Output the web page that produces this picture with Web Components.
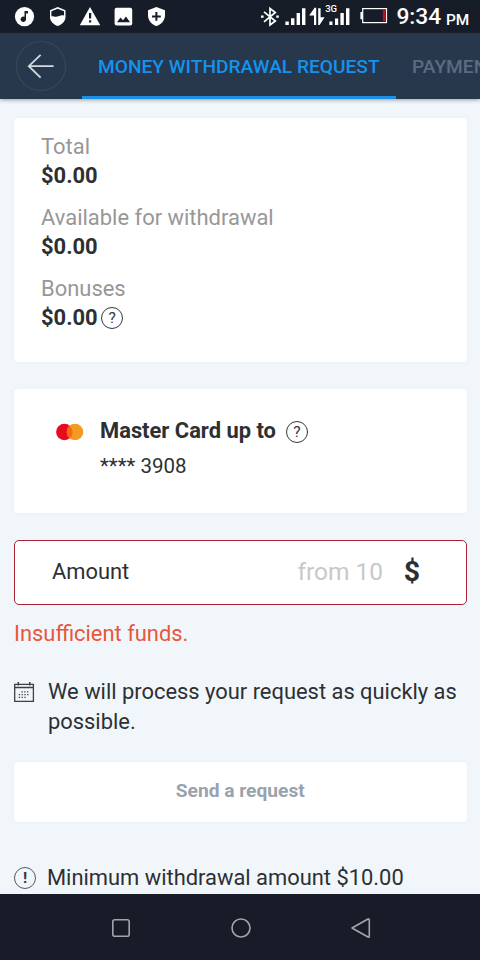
<!DOCTYPE html>
<html lang="en">
<head>
<meta charset="utf-8">
<title>Money withdrawal request</title>
<style>
html,body{margin:0;height:100%;overflow:hidden}
body{font-family:Roboto,"Liberation Sans",sans-serif;color:#2d3033;background:#f1f6fb}
</style>
</head>
<body>
<withdraw-app></withdraw-app>
<script>
const define = (name, html, fill) => customElements.define(name, class extends HTMLElement {
  connectedCallback() {
    if (this.shadowRoot) return;
    const t = document.createElement('template');
    t.innerHTML = typeof html === 'function' ? html(this) : html;
    this.attachShadow({mode: 'open'}).append(t.content.cloneNode(true));
  }
});

/* Android status bar */
define('status-bar', `
<style>
:host{display:flex;height:33px;background:#171d28;color:#fff;position:relative;box-sizing:border-box;padding:0 11px 0 14px;justify-content:space-between}
svg{display:block}
.right{display:flex}
.time{font:500 22.8px/34px Roboto,sans-serif;margin-left:8px;width:49.6px;white-space:nowrap}
.pm{font:500 15.4px/34px Roboto,sans-serif;padding-top:3px;box-sizing:border-box;white-space:nowrap;width:23px}
.net text{font:500 9.5px Roboto,sans-serif;fill:#fff}
</style>
<svg width="156" height="33" viewBox="14 0 156 33">
  <g fill="#fff">
    <circle cx="24.5" cy="16.6" r="9.6"/>
    <path d="M50 10.2 L57.7 7 L65.5 10.2 V17 C65.5 21.5 61.5 24.7 57.7 26 C53.8 24.7 50 21.5 50 17Z"/>
    <path d="M90 7 L100.3 25.2 H79.8Z"/>
    <rect x="114.6" y="7.8" width="17.6" height="17.6" rx="2"/>
    <path d="M148 10.2 L156.4 7 L165 10.2 V15.5 C165 20.5 160.8 24.7 156.4 26 C152 24.7 148 20.5 148 15.5Z"/>
  </g>
  <g fill="#171d28">
    <path d="M24.5 11 H28 V13.5 H26 V19.2 A2.7 2.7 0 1 1 24.5 16.8Z"/>
    <path d="M51.4 11.2 L57.7 8.8 L64 11.2 V15.6 C61 14.6 58.6 16.8 55.8 16.8 C54 16.8 53 16 51.4 16.4Z"/>
    <path d="M89 13 h2.2 v5.6 h-2.2z M89 20.2 h2.2 v2.2 h-2.2z"/>
    <path d="M117 22.2 L120.5 17.4 L123 20.3 L126 16.4 L130 22.2Z"/>
    <path d="M155.4 12 h2 v3.4 h3.4 v2 h-3.4 v3.4 h-2 v-3.4 h-3.4 v-2 h3.4z"/>
  </g>
</svg>
<div class="right">
  <svg class="net" width="128" height="33" viewBox="260 0 128 33">
    <path d="M264 11.8 L275.3 21 L270 25 V8.5 L275.3 12.5 L264 21.8" fill="none" stroke="#fff" stroke-width="1.7"/>
    <path d="M261 15.6h2.6v2.2H261z M276.2 15.6h2.6v2.2h-2.6z" fill="#fff"/>
    <path fill="#fff" d="M285.4 21.4h3.4V25h-3.4zM291 18.2h3.4V25H291zM296.6 13h3.4v12h-3.4zM302 8.2h3.4V25H302z"/>
    <path fill="#fff" d="M309.2 15.4 L314.6 7.8 H316.2 V25 H314 V15.4Z M318.2 8.2 H320.6 V17.2 H324.6 L319.6 25 H318.2Z"/>
    <path fill="#fff" d="M329.4 21.6h3V25h-3zM335 18.4h3.2V25H335zM340.4 13h3.4v12h-3.4zM346 8.2h3.4V25H346z"/>
    <text x="325.2" y="11.8">3G</text>
    <rect x="362.7" y="8.6" width="23.8" height="14" fill="none" stroke="#fff" stroke-width="1.2"/>
    <path fill="#fff" d="M360.4 12h2.3v7.2h-2.3z"/>
    <path fill="#b5131d" d="M382.8 10h2.8v11.2h-2.8z"/>
  </svg>
  <span class="time">9:34</span><span class="pm">PM</span>
</div>`);

/* Header with back button and tab strip */
define('tab-header', `
<style>
:host{display:flex;height:66px;background:#27384c;overflow:hidden;position:relative;z-index:1;box-shadow:0 1px 4px rgba(40,50,65,.45)}
.back{flex:none;width:82px;display:block}
::slotted(tab-item){flex:none}
</style>
<svg class="back" width="82" height="66" viewBox="0 33 82 66" fill="none">
  <circle cx="41" cy="66" r="24.5" stroke="#37475a" stroke-width="1.2"/>
  <path d="M53.6 66.2H29M40.6 54.8L28.8 66.2L40.6 77.6" stroke="#d5dae0" stroke-width="1.8"/>
</svg><slot></slot>`);
define('tab-item', `
<style>
:host{display:block;box-sizing:border-box;height:66px;padding:0 16px;font-weight:500;font-size:19.15px;line-height:67px;white-space:nowrap;color:#5a6c80}
:host([active]){color:#1592ee;border-bottom:3px solid #1a8fe3;width:314px}
</style><slot></slot>`);

/* Circled glyph */
define('round-mark', `
<style>
:host{display:block;flex:none;width:22px;height:22px;box-sizing:border-box;border:1.5px solid #34383c;border-radius:50%;font-size:15.5px;line-height:21px;text-align:center;color:#34383c;font-weight:400}
:host([bold]){font-weight:700;border-color:#55595d}
</style><slot></slot>`);

define('white-card', `
<style>:host{display:flex;box-sizing:border-box;background:#fff;border-radius:4px;box-shadow:0 0 3px rgba(225,235,244,.7)}</style>
<slot></slot>`);

define('balance-row', el => `
<style>
:host{display:block;font-size:21.95px;line-height:28px}
.l{color:#979797}
.v{display:flex;font-weight:700;align-items:center;gap:3.5px;line-height:29px;height:29px}
</style>
<div class="l">${el.getAttribute('label')}</div><div class="v"><span>$0.00</span><slot></slot></div>`);

define('amount-field', `
<style>
:host{display:flex;box-sizing:border-box;height:65.5px;background:#fff;border:1.5px solid #a82234;border-radius:5px;padding:0 45.5px 0 37px;align-items:center;font-size:21.9px;line-height:62px;white-space:nowrap}
.ph{margin-left:auto;color:#c8c8c8;font-size:24.5px;padding-right:20.5px;line-height:60px;height:61.5px}
b{font-size:28.5px;line-height:62px}
</style>
<span>Amount</span><span class="ph">from 10</span><b>$</b>`);

define('note-line', `
<style>:host{display:flex;font-size:21.9px;line-height:30px}
div{flex:1}</style>
<slot name="icon"></slot><div><slot></slot></div>`);

define('nav-bar', `
<style>:host{display:block;height:66px;background:#171c28;position:relative;z-index:1}svg{display:block}</style>
<svg width="480" height="66" viewBox="0 894 480 66" fill="none" stroke="#a2a5ab" stroke-width="1.6">
  <rect x="112.8" y="919.8" width="16.4" height="16.4" rx="2"/>
  <circle cx="241" cy="928" r="9"/>
  <path d="M352 928 L368 919 Q369.3 918.6 369.3 920 V936 Q369.3 937.6 368 937Z" stroke-linejoin="round"/>
</svg>`);

define('withdraw-app', `
<style>
:host{display:flex;flex-direction:column;height:960px;width:480px;overflow:hidden;background:#f1f6fb}
main{flex:1;min-height:0;overflow:hidden;padding:19px 13.5px 0 14px;display:flex;flex-direction:column}
main>*{flex:none}
.balances{height:243.5px;padding:15px 27px 0;flex-direction:column;gap:14px}
.method{height:124px;margin-top:27.5px;padding:28px 42px 0}
.method svg{display:block;flex:none;width:44px;height:30px}
.name{display:flex;align-items:center;gap:10px;font-weight:700;font-size:21.9px;line-height:28px}
.num{font-size:20.5px;line-height:28px;margin-top:7px}
amount-field{margin-top:26.5px}
.error{font-size:21.9px;line-height:30px;color:#e8573a;margin-top:14px}
.process{margin-top:28px}
.process svg{width:34px;height:30px;display:block;flex:none}
.send{height:60px;margin-top:25px;justify-content:center;font-weight:700;font-size:19.2px;line-height:57px;color:#98a3ad}
.min{margin-top:41px}
.min round-mark{margin:4px 11px 0 0}
.name round-mark{margin-top:2px}
</style>
<status-bar></status-bar>
<tab-header><tab-item active>MONEY WITHDRAWAL REQUEST</tab-item><tab-item>PAYMENT</tab-item></tab-header>
<main>
  <white-card class="balances">
    <balance-row label="Total"></balance-row>
    <balance-row label="Available for withdrawal"></balance-row>
    <balance-row label="Bonuses"><round-mark style="margin-top:1px">?</round-mark></balance-row>
  </white-card>
  <white-card class="method">
    <svg viewBox="56 417 44 30"><circle cx="64.4" cy="432" r="8.3" fill="#e60b1e"/><circle cx="75" cy="432" r="8.3" fill="#f39a22"/><path d="M69.7 425.6a8.3 8.3 0 0 1 0 12.8a8.3 8.3 0 0 1 0-12.8" fill="#f9690e"/></svg>
    <div><div class="name"><span>Master Card up to</span><round-mark>?</round-mark></div><div class="num">**** 3908</div></div>
  </white-card>
  <amount-field></amount-field>
  <div class="error">Insufficient funds.</div>
  <note-line class="process">
    <svg slot="icon" viewBox="14 676 34 30"><g fill="none" stroke="#3c4145"><path stroke-width="1.3" d="M14.7 683.4h18.7v16.9H14.7z"/><path stroke-width="1.5" d="M14.5 686.4h19.2M18.3 681v3.4M29.8 681v3.4"/><path stroke-width="1.3" stroke-dasharray="1.3 1.5" d="M21.4 690.8h8M18.8 693.6h10.5M18.8 696.4h8"/></g></svg>
    We will process your request as quickly as possible.
  </note-line>
  <white-card class="send">Send a request</white-card>
  <note-line class="min"><round-mark bold slot="icon">!</round-mark>Minimum withdrawal amount $10.00</note-line>
</main>
<nav-bar></nav-bar>`);
</script>
</body>
</html>
